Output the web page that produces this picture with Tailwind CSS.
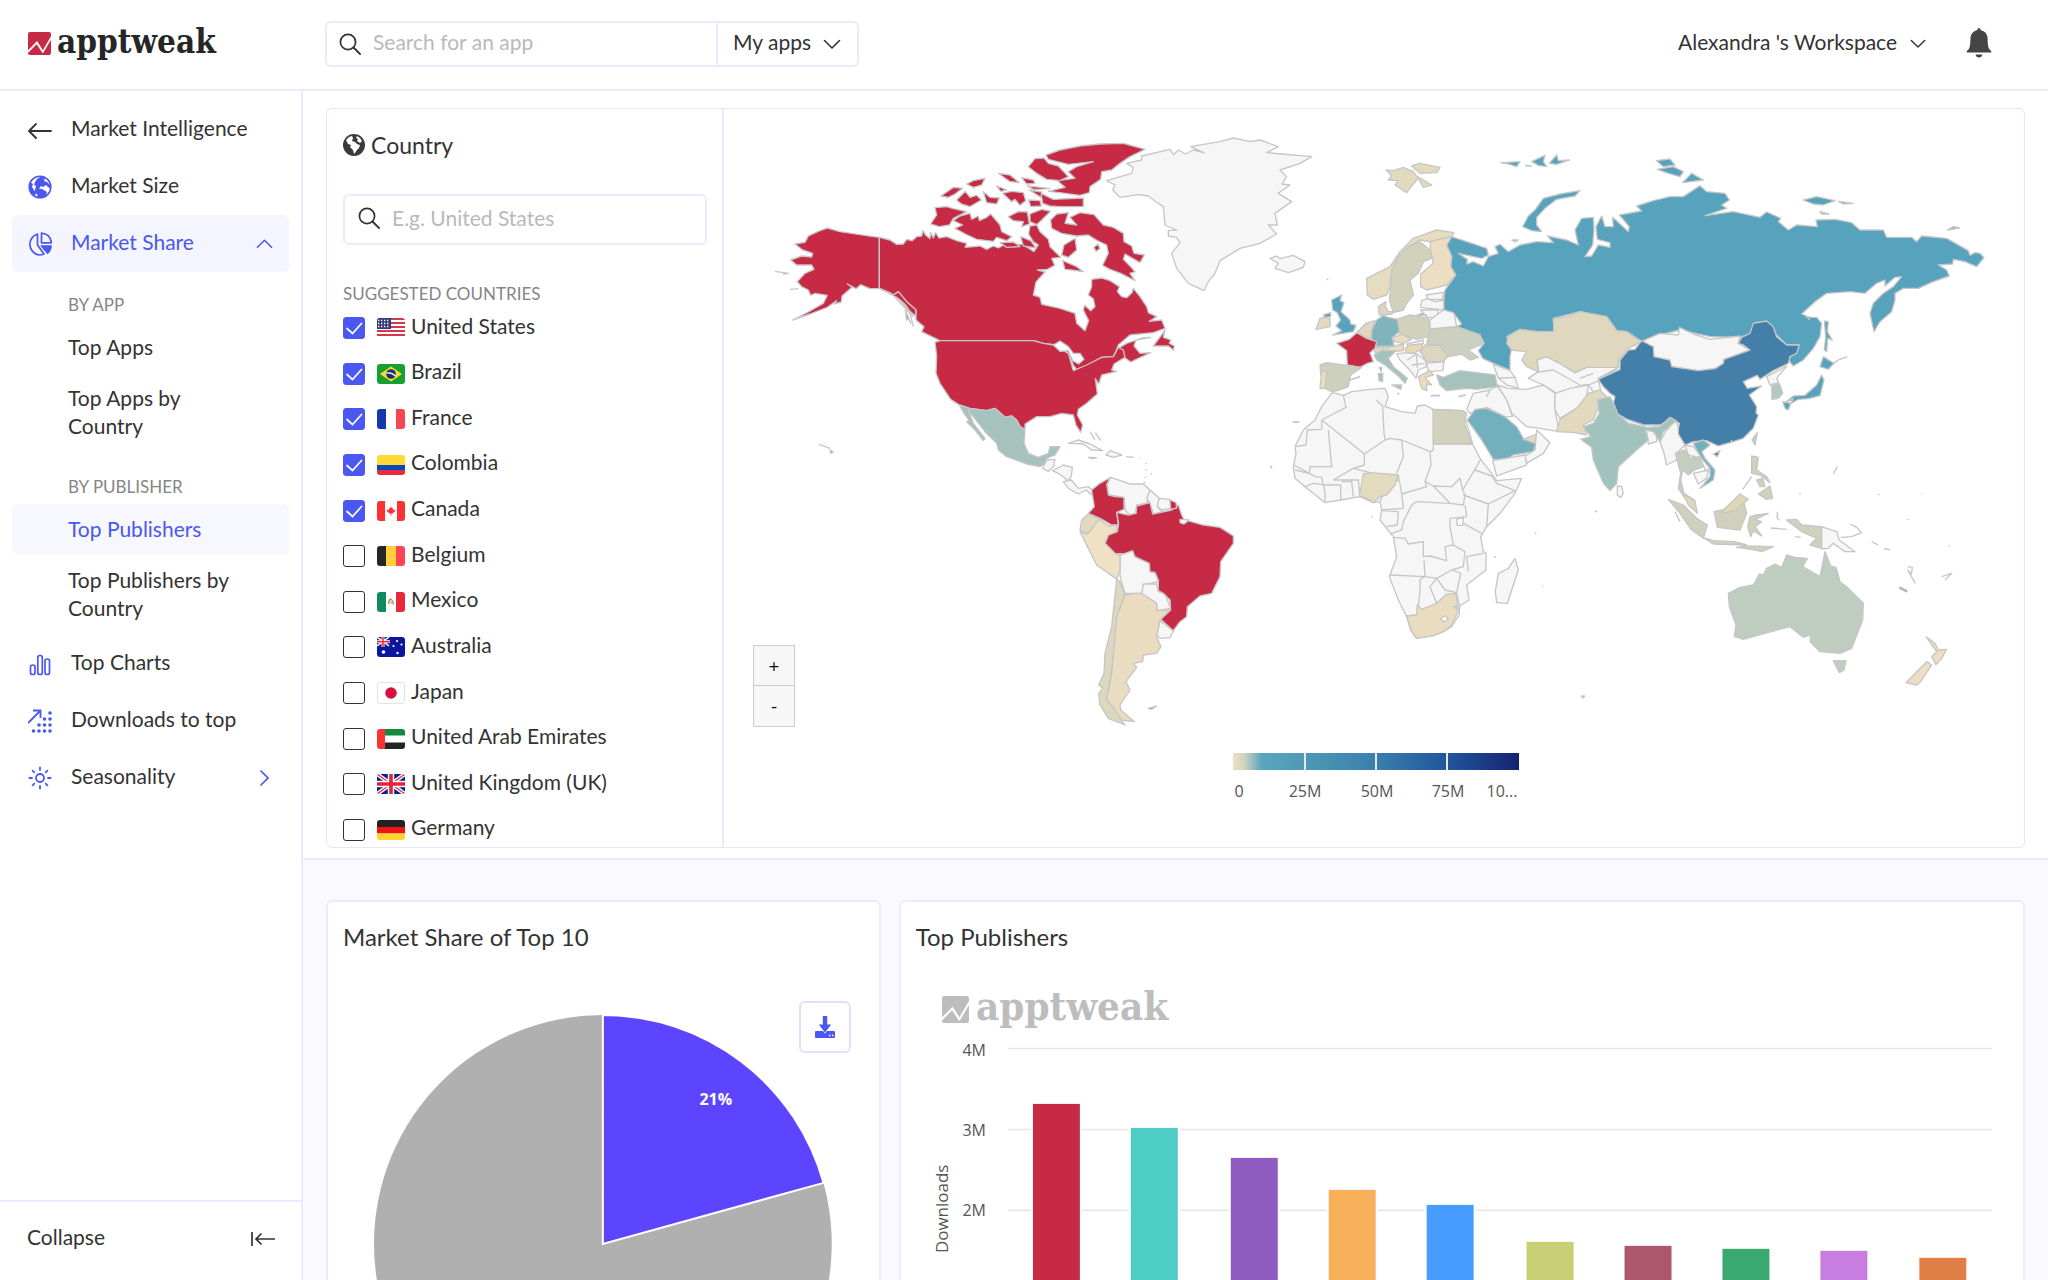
<!DOCTYPE html>
<html lang="en">
<head>
  <meta charset="UTF-8" />
  <meta name="viewport" content="width=device-width, initial-scale=1.0" />
  <title>AppTweak - Market Share</title>
  <script src="https://cdn.jsdelivr.net/npm/@tailwindcss/browser@4"></script>
</head>
<body class="h-screen flex flex-col overflow-hidden bg-white text-[#333] text-[21px] leading-7 font-[Lato,'Open_Sans',sans-serif]">

  <!-- Shared icons -->
  <svg class="hidden">
    <symbol id="i-search" viewBox="0 0 22 22"><circle cx="9" cy="9" r="7.6" fill="none" stroke="#333" stroke-width="1.7"/><path d="M14.5 14.5 21 21" stroke="#333" stroke-width="1.8" stroke-linecap="round"/></symbol>
    <symbol id="i-down" viewBox="0 0 18 10"><path d="M1.5 1.5 9 9l7.500-7.500" fill="none" stroke="currentColor" stroke-width="1.6" stroke-linecap="round" stroke-linejoin="round"/></symbol>
    <symbol id="i-check" viewBox="0 0 22 22"><path d="M4 11.500 9.500 16.500 18.500 6.500" fill="none" stroke="#fff" stroke-width="1.700" stroke-linecap="round"/></symbol>
    <symbol id="i-logo" viewBox="0 0 24 24"><path d="M2 0h20q2 0 2 2v2.500L15.500 19 9.500 9.500 0 19V2Q0 0 2 0Z"/><path d="M0 21.800 9 12.700 15.500 22.500 24 8v14q0 2-2 2H2q-2 0-2-2Z"/></symbol>
  </svg>

  <!-- Header -->
  <header class="flex items-center h-[91px] shrink-0 border-b-2 border-[#eceaff] pb-[2px]">
    <a href="#" class="flex items-center gap-[6px] w-[325px] pl-7">
      <svg class="w-[23px] h-[23px] fill-[#c62a45]"><use href="#i-logo"/></svg>
      <span class="text-[33px] leading-[38px] pb-1 font-bold text-[#262626] font-['DejaVu_Serif_Condensed','DejaVu_Serif',serif]">apptweak</span>
    </a>
    <div class="flex items-center w-[534px] h-[46px] border-2 border-[#eceaff] rounded-md">
      <label for="app-search" class="pl-3"><svg class="w-[22px] h-[22px]"><use href="#i-search"/></svg></label>
      <input id="app-search" type="text" placeholder="Search for an app" class="flex-1 min-w-0 pl-3 pb-[3px] outline-none placeholder:text-[#b9b9b9]" />
      <div class="flex items-center h-full border-l-2 border-[#eceaff] pl-[15px] pr-4">
        <select aria-label="App scope" class="appearance-none outline-none bg-transparent pr-[11px] pb-[3px]"><option>My apps</option></select>
        <svg class="w-[18px] h-[10px]"><use href="#i-down"/></svg>
      </div>
    </div>
    <div class="flex items-center ml-auto pr-[56px]">
      <select aria-label="Workspace" class="appearance-none outline-none bg-transparent pr-3 pb-[3px]"><option>Alexandra 's Workspace</option></select>
      <svg class="w-[16px] h-[9px]"><use href="#i-down"/></svg>
      <button aria-label="Notifications" class="ml-10 pb-[2px]">
        <svg class="w-[26px] h-[30px] fill-[#444]" viewBox="0 0 26 30"><path d="M13 0q1.500 0 1.600 2 6.800 1.500 7 9 0 7 1.500 10 2.400 1.500 2.400 3.500H.5q0-2 2.400-3.500 1.500-3 1.500-10 .2-7.500 7-9Q11.500 0 13 0ZM9.500 26.500h7q-.7 3-3.500 3t-3.500-3Z"/></svg>
      </button>
    </div>
  </header>

  <div class="flex flex-1 min-h-0">
    <!-- Sidebar -->
    <aside class="flex flex-col w-[303px] shrink-0 border-r-2 border-[#eceaff]">
      <nav class="flex-1 px-3 pt-[10px]">
        <a href="#" class="flex items-center h-[57px] pl-4 gap-[19px]">
          <svg class="w-6 h-6" viewBox="0 0 24 24"><path d="M23 13H1M8 6 1 13l7 7" fill="none" stroke="#333" stroke-width="1.800" stroke-linecap="round" stroke-linejoin="round"/></svg>
          <span class="pb-[3px]">Market Intelligence</span>
        </a>
        <a href="#" class="flex items-center h-[57px] pl-4 gap-[19px]">
          <svg class="w-6 h-6" viewBox="0 0 24 24"><circle cx="12" cy="12" r="10.800" fill="#fff" stroke="#4a57f0" stroke-width="1.600"/><path d="M13 1.500 17 3l-1 3 3 1 3 3 1 4-3-2-2-2-3 2-2-1-2 3-4 1 1-4-2-1L7 7l2-3Z M8 14l6 0 5 3-1 3-3 3H10l-1-4-3-2Z" fill="#4a57f0"/><path d="M2 7 5 9 4 12 8 18 7 21 2 17Z" fill="#4a57f0"/></svg>
          <span class="pb-[3px]">Market Size</span>
        </a>
        <a href="#" class="flex items-center h-[57px] pl-4 pr-4 gap-[19px] rounded-md bg-[#f4f5ff] text-[#4a57f0]">
          <svg class="w-6 h-6" viewBox="0 0 24 24" fill="none" stroke="#4a57f0" stroke-width="1.700" stroke-linejoin="round"><path d="M9.500 2A10.800 10.800 0 0 0 11 23q3 0 5-1L9.500 13Z"/><path d="M13.500 1v9.800h9.800Q22.500 2 13.500 1Z"/><path d="M13.500 14H23q0 4-3.500 7Z" fill="#4a57f0"/></svg>
          <span class="pb-[3px]">Market Share</span>
          <svg class="w-[17px] h-[10px] ml-auto rotate-180"><use href="#i-down"/></svg>
        </a>
        <p class="mt-[17px] pl-14 h-[33px] leading-8 text-[17px] text-[#858585]">BY APP</p>
        <a href="#" class="block pl-14 pt-[11px] pb-3">Top Apps</a>
        <a href="#" class="block pl-14 pt-[11px] pb-3 pr-20">Top Apps by Country</a>
        <p class="mt-[19px] pl-14 h-[33px] leading-8 text-[17px] text-[#858585]">BY PUBLISHER</p>
        <a href="#" class="block pl-14 pt-[11px] pb-3 rounded-md bg-[#f7f8fe] text-[#4a57f0]">Top Publishers</a>
        <a href="#" class="block pl-14 pt-[11px] pb-3 pr-10">Top Publishers by Country</a>
        <a href="#" class="flex items-center h-[57px] mt-px pl-4 gap-[19px]">
          <svg class="w-6 h-6" viewBox="0 0 24 24" fill="none" stroke="#4a57f0" stroke-width="1.700"><rect x="2.500" y="13" width="4.500" height="9.500" rx="2"/><rect x="9.800" y="3.500" width="4.500" height="19" rx="2"/><rect x="17" y="7" width="4.500" height="15.500" rx="2"/></svg>
          <span class="pb-[3px]">Top Charts</span>
        </a>
        <a href="#" class="flex items-center h-[57px] pl-4 gap-[19px]">
          <svg class="w-6 h-6" viewBox="0 0 24 24" fill="#4a57f0"><path d="M0 14 12 2M5 1.500h7.500V9" fill="none" stroke="#4a57f0" stroke-width="1.800"/><circle cx="22" cy="4" r="1.800"/><circle cx="22" cy="10" r="1.800"/><circle cx="16.500" cy="10" r="1.800"/><circle cx="22" cy="16" r="1.800"/><circle cx="16.500" cy="16" r="1.800"/><circle cx="11" cy="16" r="1.800"/><circle cx="22" cy="22" r="1.800"/><circle cx="16.500" cy="22" r="1.800"/><circle cx="11" cy="22" r="1.800"/><circle cx="5.500" cy="22" r="1.800"/></svg>
          <span class="pb-[3px]">Downloads to top</span>
        </a>
        <a href="#" class="flex items-center h-[57px] pl-4 pr-5 gap-[19px]">
          <svg class="w-6 h-6" viewBox="0 0 24 24" fill="none" stroke="#4a57f0" stroke-width="1.800" stroke-linecap="round"><circle cx="12" cy="12" r="4"/><path d="M12 1.500V4M12 20v2.500M1.500 12H4M20 12h2.500M4.600 4.600 6.300 6.300M17.700 17.700l1.700 1.700M4.600 19.400l1.700-1.700M17.700 6.300l1.700-1.700"/></svg>
          <span class="pb-[3px]">Seasonality</span>
          <svg class="w-[9px] h-[16px] ml-auto" viewBox="0 0 9 16"><path d="M1 1 8 8 1 15" fill="none" stroke="#4a57f0" stroke-width="1.700" stroke-linecap="round"/></svg>
        </a>
      </nav>
      <button class="flex items-center justify-between h-[80px] border-t-2 border-[#eceaff] pl-[27px] pr-[26px] pb-[5px]">
        <span class="pb-[3px]">Collapse</span>
        <svg class="w-6 h-5" viewBox="0 0 24 20"><path d="M1 3v14M24 10H5M10.500 4.500 5 10l5.500 5.500" fill="none" stroke="#333" stroke-width="1.700"/></svg>
      </button>
    </aside>

    <main class="flex-1 min-w-0 overflow-hidden bg-[#faf9ff]">
      <section class="bg-white border-b-2 border-[#eceaff] px-[23px] pt-[17px] pb-[10px]">
        <div class="flex border border-[#e6e4ff] rounded-md">

          <!-- Country filter -->
          <div class="flex flex-col w-[397px] shrink-0 border-r-2 border-[#eceaff] pl-4 pr-[15px] pt-5 pb-[6px]">
            <h2 class="flex items-center gap-[6px] h-8 text-[23px]">
              <svg class="w-[22px] h-[22px]" viewBox="0 0 22 22"><circle cx="11" cy="11" r="11" fill="#3a3a3a"/><path d="M6 3 9 2l1 2-1 3 3 1 2 2 3 1-1 3-2 2-2 3-1 1-1-4-3-3 1-2-3-1-2-4ZM14 2l3 2 2 3-2 2-3-2 1-2-2-1Z" fill="#fff"/></svg>
              Country
            </h2>
            <div class="flex items-center mt-[33px] h-[51px] border-2 border-[#eceaff] rounded-md">
              <label for="country-search" class="pl-[13px] pb-1"><svg class="w-[22px] h-[22px]"><use href="#i-search"/></svg></label>
              <input id="country-search" type="text" placeholder="E.g. United States" class="flex-1 min-w-0 pl-3 pb-1 outline-none placeholder:text-[#b9b9b9]" />
            </div>
            <h3 class="mt-[35px] mb-[9px] text-[17px] text-[#858585]">SUGGESTED COUNTRIES</h3>
            <ul class="flex flex-col flex-1 justify-between">
              <li class="flex items-center h-[22px]">
                <span class="grid mr-3"><input id="c-us" type="checkbox" checked class="peer [grid-area:1/1] appearance-none w-[22px] h-[22px] rounded-[3px] border border-[#333] checked:border-[#4a57f0] checked:bg-[#4a57f0]" /><svg class="hidden peer-checked:block [grid-area:1/1] w-[22px] h-[22px] pointer-events-none"><use href="#i-check"/></svg></span>
                <svg class="w-[28px] h-5 mr-[6px] rounded-[3px]" viewBox="0 0 28 20"><path fill="#fff" d="M0 0h28v20H0z"/><path d="M0 1h28M0 5h28M0 9h28M0 13h28M0 17h28" stroke="#d2374d" stroke-width="1.900"/><path fill="#34397c" d="M0 0h14v11H0z"/><path d="M1 2.500h12M1 5.500h12M1 8.500h12" stroke="#fff" stroke-width="1.400" stroke-dasharray="1.400 1.600"/></svg>
                <label for="c-us" class="pb-[5px]">United States</label>
              </li>
              <li class="flex items-center h-[22px]">
                <span class="grid mr-3"><input id="c-br" type="checkbox" checked class="peer [grid-area:1/1] appearance-none w-[22px] h-[22px] rounded-[3px] border border-[#333] checked:border-[#4a57f0] checked:bg-[#4a57f0]" /><svg class="hidden peer-checked:block [grid-area:1/1] w-[22px] h-[22px] pointer-events-none"><use href="#i-check"/></svg></span>
                <svg class="w-[28px] h-5 mr-[6px] rounded-[3px]" viewBox="0 0 28 20"><path fill="#17a02f" d="M0 0h28v20H0z"/><path fill="#ffdc27" d="M14 2.500 25 10 14 17.500 3 10Z"/><circle cx="14" cy="10" r="4.800" fill="#14317e"/><path d="M9.500 9q5-1 9 3" fill="none" stroke="#fff" stroke-width="1.300"/></svg>
                <label for="c-br" class="pb-[5px]">Brazil</label>
              </li>
              <li class="flex items-center h-[22px]">
                <span class="grid mr-3"><input id="c-fr" type="checkbox" checked class="peer [grid-area:1/1] appearance-none w-[22px] h-[22px] rounded-[3px] border border-[#333] checked:border-[#4a57f0] checked:bg-[#4a57f0]" /><svg class="hidden peer-checked:block [grid-area:1/1] w-[22px] h-[22px] pointer-events-none"><use href="#i-check"/></svg></span>
                <svg class="w-[28px] h-5 mr-[6px] rounded-[3px]" viewBox="0 0 28 20"><path fill="#1437ad" d="M0 0h9v20H0z"/><path fill="#fff" d="M9 0h10v20H9z"/><path fill="#f44653" d="M19 0h9v20h-9z"/></svg>
                <label for="c-fr" class="pb-[5px]">France</label>
              </li>
              <li class="flex items-center h-[22px]">
                <span class="grid mr-3"><input id="c-co" type="checkbox" checked class="peer [grid-area:1/1] appearance-none w-[22px] h-[22px] rounded-[3px] border border-[#333] checked:border-[#4a57f0] checked:bg-[#4a57f0]" /><svg class="hidden peer-checked:block [grid-area:1/1] w-[22px] h-[22px] pointer-events-none"><use href="#i-check"/></svg></span>
                <svg class="w-[28px] h-5 mr-[6px] rounded-[3px]" viewBox="0 0 28 20"><path fill="#ffd935" d="M0 0h28v10H0z"/><path fill="#0c47b7" d="M0 10h28v5H0z"/><path fill="#e32c3f" d="M0 15h28v5H0z"/></svg>
                <label for="c-co" class="pb-[5px]">Colombia</label>
              </li>
              <li class="flex items-center h-[22px]">
                <span class="grid mr-3"><input id="c-ca" type="checkbox" checked class="peer [grid-area:1/1] appearance-none w-[22px] h-[22px] rounded-[3px] border border-[#333] checked:border-[#4a57f0] checked:bg-[#4a57f0]" /><svg class="hidden peer-checked:block [grid-area:1/1] w-[22px] h-[22px] pointer-events-none"><use href="#i-check"/></svg></span>
                <svg class="w-[28px] h-5 mr-[6px] rounded-[3px]" viewBox="0 0 28 20"><path fill="#fff" d="M0 0h28v20H0z"/><path fill="#fc3232" d="M0 0h8v20H0zM20 0h8v20h-8zM14 5.500l1.200 2 1.200-.5-.4 2.500 1.500-1 .8 1.500-2.800 2.500-1.200.2V15h-.6v-2.300L12.500 12.500 9.700 10l.8-1.500 1.500 1-.4-2.500 1.200.5Z"/></svg>
                <label for="c-ca" class="pb-[5px]">Canada</label>
              </li>
              <li class="flex items-center h-[22px]">
                <span class="grid mr-3"><input id="c-be" type="checkbox" class="peer [grid-area:1/1] appearance-none w-[22px] h-[22px] rounded-[3px] border border-[#333] checked:border-[#4a57f0] checked:bg-[#4a57f0]" /><svg class="hidden peer-checked:block [grid-area:1/1] w-[22px] h-[22px] pointer-events-none"><use href="#i-check"/></svg></span>
                <svg class="w-[28px] h-5 mr-[6px] rounded-[3px]" viewBox="0 0 28 20"><path fill="#262626" d="M0 0h9v20H0z"/><path fill="#ffcf3b" d="M9 0h10v20H9z"/><path fill="#ff4453" d="M19 0h9v20h-9z"/></svg>
                <label for="c-be" class="pb-[5px]">Belgium</label>
              </li>
              <li class="flex items-center h-[22px]">
                <span class="grid mr-3"><input id="c-mx" type="checkbox" class="peer [grid-area:1/1] appearance-none w-[22px] h-[22px] rounded-[3px] border border-[#333] checked:border-[#4a57f0] checked:bg-[#4a57f0]" /><svg class="hidden peer-checked:block [grid-area:1/1] w-[22px] h-[22px] pointer-events-none"><use href="#i-check"/></svg></span>
                <svg class="w-[28px] h-5 mr-[6px] rounded-[3px]" viewBox="0 0 28 20"><path fill="#128a60" d="M0 0h9v20H0z"/><path fill="#fff" d="M9 0h10v20H9z"/><path fill="#e8283c" d="M19 0h9v20h-9z"/><path d="M12 12q-1-3 1.500-5Q17 9 16 12.500" fill="none" stroke="#a98a5b" stroke-width="1.300"/><path d="M13.500 9.500l1.500 2" stroke="#6a8f55"/></svg>
                <label for="c-mx" class="pb-[5px]">Mexico</label>
              </li>
              <li class="flex items-center h-[22px]">
                <span class="grid mr-3"><input id="c-au" type="checkbox" class="peer [grid-area:1/1] appearance-none w-[22px] h-[22px] rounded-[3px] border border-[#333] checked:border-[#4a57f0] checked:bg-[#4a57f0]" /><svg class="hidden peer-checked:block [grid-area:1/1] w-[22px] h-[22px] pointer-events-none"><use href="#i-check"/></svg></span>
                <svg class="w-[28px] h-5 mr-[6px] rounded-[3px]" viewBox="0 0 28 20"><path fill="#0a179c" d="M0 0h28v20H0z"/><path d="M0 0 12 9M12 0 0 9" stroke="#fff" stroke-width="1.500"/><path d="M6 0v10M0 4.700h13" stroke="#fff" stroke-width="3"/><path d="M6 0v10M0 4.700h13" stroke="#f02f45" stroke-width="1.600"/><circle cx="6.500" cy="15" r="1.800" fill="#fff"/><circle cx="20" cy="4" r="1.100" fill="#fff"/><circle cx="24.500" cy="7.500" r="1.100" fill="#fff"/><circle cx="16.500" cy="9" r="1.100" fill="#fff"/><circle cx="20.500" cy="16" r="1.200" fill="#fff"/></svg>
                <label for="c-au" class="pb-[5px]">Australia</label>
              </li>
              <li class="flex items-center h-[22px]">
                <span class="grid mr-3"><input id="c-jp" type="checkbox" class="peer [grid-area:1/1] appearance-none w-[22px] h-[22px] rounded-[3px] border border-[#333] checked:border-[#4a57f0] checked:bg-[#4a57f0]" /><svg class="hidden peer-checked:block [grid-area:1/1] w-[22px] h-[22px] pointer-events-none"><use href="#i-check"/></svg></span>
                <svg class="w-[28px] h-[22px] mr-[6px]" viewBox="0 0 28 22"><rect x=".5" y=".5" width="27" height="21" rx="2.500" fill="#fff" stroke="#e3e3e3"/><circle cx="14" cy="11" r="5.800" fill="#d80f3e"/></svg>
                <label for="c-jp" class="pb-[5px]">Japan</label>
              </li>
              <li class="flex items-center h-[22px]">
                <span class="grid mr-3"><input id="c-ae" type="checkbox" class="peer [grid-area:1/1] appearance-none w-[22px] h-[22px] rounded-[3px] border border-[#333] checked:border-[#4a57f0] checked:bg-[#4a57f0]" /><svg class="hidden peer-checked:block [grid-area:1/1] w-[22px] h-[22px] pointer-events-none"><use href="#i-check"/></svg></span>
                <svg class="w-[28px] h-5 mr-[6px] rounded-[3px]" viewBox="0 0 28 20"><path fill="#fff" d="M8 6h20v8H8z"/><path fill="#128a3d" d="M8 0h20v6.500H8z"/><path fill="#232323" d="M8 13.500h20V20H8z"/><path fill="#fc3232" d="M0 0h8v20H0z"/></svg>
                <label for="c-ae" class="pb-[5px]">United Arab Emirates</label>
              </li>
              <li class="flex items-center h-[22px]">
                <span class="grid mr-3"><input id="c-uk" type="checkbox" class="peer [grid-area:1/1] appearance-none w-[22px] h-[22px] rounded-[3px] border border-[#333] checked:border-[#4a57f0] checked:bg-[#4a57f0]" /><svg class="hidden peer-checked:block [grid-area:1/1] w-[22px] h-[22px] pointer-events-none"><use href="#i-check"/></svg></span>
                <svg class="w-[28px] h-5 mr-[6px] rounded-[3px]" viewBox="0 0 28 20"><path fill="#0b1c8f" d="M0 0h28v20H0z"/><path d="M0 0 28 20M28 0 0 20" stroke="#fff" stroke-width="4"/><path d="M0 0 28 20M28 0 0 20" stroke="#e02a43" stroke-width="1.300"/><path d="M14 0v20M0 10h28" stroke="#fff" stroke-width="6.500"/><path d="M14 0v20M0 10h28" stroke="#e6223d" stroke-width="3.600"/></svg>
                <label for="c-uk" class="pb-[5px]">United Kingdom (UK)</label>
              </li>
              <li class="flex items-center h-[22px]">
                <span class="grid mr-3"><input id="c-de" type="checkbox" class="peer [grid-area:1/1] appearance-none w-[22px] h-[22px] rounded-[3px] border border-[#333] checked:border-[#4a57f0] checked:bg-[#4a57f0]" /><svg class="hidden peer-checked:block [grid-area:1/1] w-[22px] h-[22px] pointer-events-none"><use href="#i-check"/></svg></span>
                <svg class="w-[28px] h-5 mr-[6px] rounded-[3px]" viewBox="0 0 28 20"><path fill="#222" d="M0 0h28v7H0z"/><path fill="#f11414" d="M0 7h28v6.500H0z"/><path fill="#ffd52f" d="M0 13.500h28V20H0z"/></svg>
                <label for="c-de" class="pb-[5px]">Germany</label>
              </li>
            </ul>
          </div>

          <!-- World map -->
          <div class="relative flex-1 min-w-0">
            <svg class="block w-full h-auto" viewBox="724 109 1300 738" role="img" aria-label="Downloads by country">
              <!-- North America -->
              <g transform="translate(740 110) scale(.33333)" stroke="#c6c6c6" stroke-width="4" stroke-linejoin="round">
                <g fill="#c62a45">
                  <path d="M418 382 400 380 360 374 300 365 262 354 240 362 205 378 195 397 165 402 188 420 218 430 215 441 185 438 152 450 170 465 215 465 222 478 195 490 172 515 185 530 205 540 212 556 225 550 262 556 250 580 205 606 158 630 210 612 262 592 290 572 282 582 304 576 306 558 336 532 322 522 348 536 362 524 390 536 418 535Z"/>
                  <path d="M418 382 450 390 470 403 490 402 500 388 516 392 530 380 545 378 549 362 556 374 570 386 572 368 580 384 587 368 597 384 620 380 650 392 680 400 676 412 720 408 740 418 760 408 775 414 800 400 850 404 882 425 895 405 880 395 866 372 870 348 890 345 900 365 925 388 930 410 950 430 962 442 935 445 944 466 922 478 892 480 915 486 888 516 880 555 900 562 905 583 960 595 1005 610 1010 640 1035 662 1046 632 1030 600 1034 586 1052 602 1065 590 1060 566 1045 555 1055 530 1055 508 1085 504 1110 512 1138 530 1132 545 1145 560 1160 563 1176 548 1180 535 1200 560 1220 590 1225 608 1250 620 1228 634 1265 630 1275 655 1240 668 1170 675 1135 705 1130 718 1160 700 1210 683 1232 682 1188 690 1182 708 1200 730 1232 728 1195 745 1172 756 1150 740 1140 715 1130 720 1120 740 1085 742 1060 760 1010 780 1000 765 985 730 950 705 910 700 880 692 600 692 575 680 545 665 552 650 528 630 528 600 500 575 475 545 460 555 418 535Z"/>
                  <path d="M585 697 600 692 880 692 910 700 940 705 985 730 1000 782 1040 765 1085 742 1120 740 1135 712 1150 720 1155 742 1122 762 1115 780 1130 784 1085 795 1076 822 1066 806 1072 852 1040 880 1015 898 1012 915 1028 945 1022 967 1008 945 1000 915 965 910 930 920 890 920 855 942 855 958 840 950 830 930 815 918 795 922 765 895 740 902 690 895 658 885 632 868 600 820 588 790 590 735Z"/>
                  <path d="M1275 660 1258 684 1240 708 1285 708 1300 720 1303 708 1288 700 1292 690 1270 682Z"/>
                  <path d="M418 535 450 548 460 555 475 545 500 575 528 600 526 618 510 604 494 582 470 562 440 546Z"/>
                  <path d="M585 293 620 290 640 296 680 305 640 325 628 345 598 350 572 342 590 315Z"/>
                  <path d="M640 332 660 318 690 310 695 328 715 318 718 332 740 322 752 312 780 345 785 365 815 380 800 392 770 382 760 394 710 388 676 372 645 355 668 345Z"/>
                  <path d="M603 258 640 232 668 235 645 252 625 262Z"/><path d="M650 270 676 244 690 262 710 256 724 270 690 290 664 282Z"/><path d="M730 245 750 262 778 264 770 282 740 278Z"/><path d="M775 190 810 195 838 218 808 214Z"/><path d="M788 250 815 244 850 248 857 272 840 286 825 268 815 275Z"/><path d="M680 222 700 212 735 205 725 225 700 232Z"/><path d="M845 203 880 210 885 220 860 222Z"/><path d="M770 228 800 240 782 244Z"/><path d="M862 228 900 232 930 236 880 238Z"/>
                  <path d="M805 320 835 305 862 306 868 342 845 350 850 335 820 332Z"/><path d="M866 270 900 272 904 288 872 290Z"/><path d="M870 312 905 298 932 304 905 330 890 344 870 335Z"/><path d="M842 380 872 392 888 414 850 408Z"/><path d="M780 398 820 396 840 410 800 412Z"/>
                  <path d="M903 250 940 268 1030 264 1030 290 960 290 930 288 908 280Z"/><path d="M868 240 905 246 903 262Z"/>
                  <path d="M918 135 960 120 1020 108 1080 102 1150 100 1215 118 1170 140 1140 160 1115 180 1085 185 1082 208 1050 230 1048 248 1020 256 960 248 925 244 975 232 952 212 1005 205 985 185 1010 170 1060 155 985 163 925 148Z"/>
                  <path d="M865 170 885 146 912 144 925 160 955 168 985 200 960 212 920 208 890 190Z"/>
                  <path d="M935 355 932 330 950 312 985 308 975 340 1010 345 990 322 1020 308 1062 314 1090 345 1120 352 1150 370 1152 395 1175 408 1182 430 1213 435 1200 458 1155 432 1150 448 1172 470 1185 485 1170 490 1185 512 1142 490 1110 478 1088 466 1105 430 1100 405 1072 392 1045 375 1010 378 965 370Z"/>
                  <path d="M965 435 972 405 1005 385 1010 420 985 442Z"/><path d="M968 452 1010 470 1030 485 995 480 975 478Z"/>
                  <path d="M270 1020 280 1026 273 1030Z"/><path d="M496 600 512 640 505 625 500 630Z" />
                </g>
                <path d="M940 705 960 693 985 710 1000 730 1020 730 1032 748 1016 762 998 752 985 722 960 724Z" fill="#fff"/>
                <path d="M1062 412 1074 402 1080 416 1068 424Z" fill="#c62a45"/>
                <path d="M1205 138 1290 118 1300 134 1316 120 1336 132 1360 120 1392 128 1352 110 1440 95 1480 84 1530 95 1560 90 1615 110 1580 128 1715 140 1680 160 1620 180 1640 200 1626 222 1650 225 1615 250 1655 275 1605 310 1612 345 1585 345 1610 372 1560 400 1500 415 1440 452 1425 490 1405 515 1392 542 1345 520 1310 475 1295 430 1320 398 1310 382 1285 378 1285 362 1310 360 1275 345 1270 290 1240 270 1225 258 1195 254 1140 262 1118 240 1125 225 1100 212 1175 190 1180 172 1160 160 1205 150Z" fill="#f6f6f6"/>
                <path d="M658 885 690 895 740 902 765 895 795 922 815 918 830 930 840 950 855 958 852 1000 865 1030 895 1042 925 1030 930 1010 960 1010 945 1035 920 1045 915 1060 900 1070 860 1062 800 1040 775 1020 770 1000 735 965 700 920 685 900 700 940 735 985 730 992 705 960 680 935 688 932 672 910Z" fill="#a5c2bc"/>
                <path d="M105 484 145 490 128 493M150 538 175 536M237 1003 270 1015M465 562 510 610 520 650M480 570 520 620M1050 965 1065 990M1066 968 1082 992" fill="none"/>
              </g>
              <!-- South America -->
              <g transform="translate(1000 380) scale(.33333)" stroke="#c6c6c6" stroke-width="4" stroke-linejoin="round">
                <g fill="#f6f6f6">
                  <path d="M128 265 140 240 165 238 160 260 145 274Z"/><path d="M158 272 190 255 217 262 214 288 205 302 175 280Z"/><path d="M190 305 214 300 235 325 265 320 280 332 275 345 258 330 235 342 205 325Z"/>
                  <path d="M205 190 235 180 270 192 308 212 275 210 250 192Z"/><path d="M318 225 330 212 365 225 340 232Z"/><path d="M265 232 290 233 278 236Z"/><path d="M380 230 400 232Z"/>
                  <path d="M332 292 322 312 325 345 372 352 375 390 390 405 408 400 410 375 440 370 450 330 430 312 390 312 350 298Z"/><path d="M450 330 478 355 472 380 488 398 460 402 450 370 440 355Z"/><path d="M478 355 510 358 512 385 484 390 472 378Z"/>
                  <path d="M360 525 398 512 405 530 448 550 450 575 468 580 475 605 430 615 425 640 375 640 360 590Z"/><path d="M430 612 470 612 475 635 494 640 512 685 470 692 470 670 425 645Z"/><path d="M480 722 520 752 510 773 480 775 468 762Z"/>
                </g>
                <g fill="#c62a45">
                  <path d="M332 292 320 312 325 345 345 350 372 352 372 388 350 397 355 435 335 435 300 415 265 400 283 380 275 330 300 310Z"/>
                  <path d="M350 397 385 405 408 400 410 378 450 368 458 402 515 390 535 375 545 405 552 418 570 424 610 435 660 442 700 468 700 490 662 545 660 590 635 640 600 648 562 680 560 710 540 725 520 752 482 718 512 690 510 660 490 640 475 632 475 600 465 577 450 575 448 550 405 530 398 512 375 520 345 522 315 490 325 465 352 455 356 430Z"/>
                  <path d="M510 360 528 368 530 384 512 388Z"/>
                </g>
                <path d="M540 418 568 420 552 432 540 428Z" fill="#fff"/>
                <path d="M265 402 298 418 262 462 240 450 245 420Z" fill="#e3dabd"/>
                <path d="M240 455 262 462 298 418 325 438 350 435 350 455 325 465 315 490 345 520 360 525 360 570 350 597 325 580 290 555 265 505Z" fill="#f0e0c4"/>
                <path d="M350 597 360 605 375 645 350 710 345 800 330 900 320 960 350 990 360 1015 375 1035 325 1015 300 975 296 940 308 925 296 915 312 880 315 820 335 740Z" fill="#dcd8bd"/>
                <path d="M375 645 405 640 425 640 470 670 470 692 510 690 480 720 470 770 483 800 470 820 430 825 428 845 400 850 410 862 378 905 390 930 360 975 362 990 403 1025 365 1020 345 990 320 960 335 880 350 710Z" fill="#e9dcc1"/>
                <path d="M445 985 470 978 455 988Z" fill="#57a3bd"/>
                <path d="M418 234v2M438 248v4M438 268v4M454 280v4M436 290v4M430 310 436 306M812 258 816 262M880 126 896 126Z" fill="none"/>
              </g>
              <!-- Europe, Russia, Central Asia -->
              <g transform="translate(1260 130) scale(.33333)" stroke="#c6c6c6" stroke-width="4" stroke-linejoin="round">
                <g fill="#f6f6f6">
                  <path d="M30 385 50 378 60 386 100 376 135 395 130 412 85 428 45 415 55 400Z"/>
                  <path d="M498 495 550 487 548 508 505 508Z"/><path d="M482 532 485 512 502 506 525 515 552 510 550 540 505 535Z"/><path d="M482 540 535 540 530 562 500 562Z"/><path d="M510 595 510 570 550 540 582 545 590 590 550 597Z"/><path d="M440 642 490 630 490 640 445 648Z"/>
                  <path d="M410 672 440 668 470 672 495 690 500 710 475 720 468 745 445 715 420 690Z"/><path d="M500 700 552 695 548 722 505 725Z"/><path d="M442 690 470 672 472 715M455 705 492 700" fill="none"/>
                  <path d="M700 703 750 722 765 742 715 745Z"/><path d="M715 745 765 742 775 775 740 765Z"/>
                  <path d="M830 690 860 680 900 700 945 728 980 712 1075 712 1040 740 1010 765 970 765 890 790 850 765 805 745 835 725Z"/>
                  <path d="M712 765 745 775 800 778 850 765 885 790 885 840 898 905 840 895 800 890 755 850 740 810Z"/><path d="M885 790 930 775 985 765 980 800 950 835 900 865 885 840Z"/><path d="M985 765 1010 755 1075 712 1015 745 1022 782 1000 785Z"/>
                  <path d="M620 838 640 790 690 780 712 768 740 810 757 860 735 860 680 832 630 850Z"/><path d="M832 690 835 726 880 720 960 765M680 800 690 780M960 745 1000 730" fill="none"/>
                </g>
                <g fill="#57a3bd">
                  <path d="M575 320 620 335 680 355 685 375 665 385 595 370 622 388 620 402 640 395 670 408 685 380 715 370 705 350 720 343 745 365 780 345 830 335 880 338 862 318 920 330 955 345 945 300 965 265 1000 262 1002 300 998 345 975 380 995 378 1015 345 1050 352 1050 338 1012 328 1008 290 1025 258 1035 290 1060 290 1058 262 1080 282 1105 305 1108 290 1078 255 1145 243 1130 228 1180 212 1230 200 1270 200 1320 167 1340 185 1395 190 1408 210 1385 225 1400 235 1335 257 1420 245 1500 262 1520 246 1562 265 1555 275 1585 300 1610 285 1672 290 1668 270 1725 268 1775 278 1800 300 1870 300 1880 322 1955 322 1970 335 1985 318 2060 325 2125 362 2130 376 2145 368 2160 370 2172 383 2150 410 2115 395 2080 388 2078 402 2035 405 2060 420 2068 438 2020 455 1975 475 1930 475 1905 490 1905 510 1895 545 1860 575 1842 605 1830 550 1840 520 1870 490 1900 470 1925 440 1905 442 1875 468 1875 450 1850 460 1815 490 1770 485 1700 490 1665 515 1625 552 1650 562 1670 562 1685 580 1680 620 1660 655 1630 690 1600 708 1585 690 1595 675 1610 660 1615 645 1580 645 1545 610 1520 575 1485 578 1475 610 1440 622 1350 620 1260 600 1200 615 1145 635 1100 605 1070 602 1040 560 960 545 880 565 882 605 830 605 780 598 740 620 755 655 750 680 750 720 700 700 668 685 655 662 672 640 660 615 590 590 605 582 580 548 552 540 552 500 555 480 587 435 572 410 575 380 560 345Z"/>
                  <path d="M788 290 805 258 825 240 850 205 900 192 960 182 945 198 890 208 855 235 830 262 830 285 845 305 815 302Z"/>
                  <path d="M722 98 780 95 770 110 750 103Z"/><path d="M815 95 855 76 850 95 860 110 835 106Z"/><path d="M868 100 890 75 895 92 928 90 890 103Z"/><path d="M756 330 775 330 765 336Z"/>
                  <path d="M1190 92 1230 87 1245 105 1210 110Z"/><path d="M1192 118 1240 110 1270 125 1260 140 1225 130Z"/><path d="M1268 158 1295 130 1330 150Z"/><path d="M1630 210 1670 200 1725 212 1690 225 1660 222Z"/><path d="M1735 214 1780 220 1750 222Z"/><path d="M1680 245 1707 252 1685 252Z"/><path d="M2062 300 2080 290 2098 294Z"/>
                  <path d="M1693 573 1705 575 1702 605 1717 630 1703 625 1700 665 1693 660 1697 620Z"/>
                  <path d="M470 556 485 550 500 556Z"/>
                  <path d="M215 510 245 495 240 512 252 518 243 545 270 570 272 582 288 586 280 605 218 615 245 602 228 588 242 570 232 548 218 540Z"/><path d="M190 555 212 548 212 560 195 562Z"/>
                </g>
                <path d="M378 120 400 122 430 112 460 125 475 145 460 162 440 188 405 165 415 152 385 150 395 138Z M455 108 480 100 540 112 530 128 480 130Z M472 140 515 165 490 172Z" fill="#e3dabd"/>
                <path d="M320 445 360 425 390 410 420 365 460 325 530 300 582 308 575 320 510 335 480 330 445 350 415 380 395 420 390 470 380 495 340 508 322 495Z" fill="#e6dcc0"/>
                <path d="M395 420 415 380 445 350 480 335 510 360 515 385 490 395 475 430 450 450 460 495 440 520 430 540 400 548 388 510 392 470Z" fill="#d2d2bc"/>
                <path d="M510 335 575 320 560 345 575 380 572 410 587 435 560 465 500 480 482 470 482 432 520 400 512 360Z" fill="#ecdec2"/>
                <path d="M355 530 378 515 376 530 385 545 402 545 395 552 358 555Z" fill="#dcd6c0"/>
                <path d="M168 598 180 565 195 562 210 565 210 590Z" fill="#e3dabd"/>
                <path d="M410 568 450 555 505 565 510 600 505 620 470 628 420 612Z" fill="#d2d2bc"/>
                <path d="M335 600 350 570 370 556 385 562 412 568 418 605 398 622 402 648 350 650 335 630Z" fill="#7fb4bd"/>
                <path d="M395 625 425 612 455 628 430 640 405 635Z M370 655 430 642 430 662 395 665Z" fill="#e9dcc1"/>
                <path d="M435 655 450 645 488 642 485 658 460 670 440 668Z" fill="#e9d8b0"/>
                <path d="M290 608 318 580 345 572 335 600 332 628Z M340 655 368 650 372 664 345 668Z" fill="#e0d7c0"/>
                <path d="M230 640 268 628 290 608 320 625 350 635 345 655 330 668 340 695 322 700 300 712 262 705 260 662Z" fill="#c62a45"/>
                <path d="M180 705 200 698 305 712 272 735 265 770 232 782 215 785 195 775 182 730Z" fill="#cdd0bd"/>
                <path d="M185 722 200 725 195 775 180 775Z" fill="#ecdcbc"/>
                <path d="M342 675 365 662 408 662 385 685 400 710 442 745 435 760 415 738 375 705 350 690Z M395 765 425 765 422 778Z M355 730 368 730 368 755 357 752Z" fill="#a5c2bc"/>
                <path d="M358 712 365 712 364 725Z" fill="#c62a45"/>
                <path d="M480 665 495 645 540 645 565 678 550 695 500 695Z" fill="#dcd6c0"/>
                <path d="M475 740 510 722 520 735 495 742 515 765 500 762 500 782 485 775Z" fill="#ecdcbc"/>
                <path d="M500 640 510 597 590 590 660 615 672 640 625 660 655 682 630 690 605 672 565 680 540 645 510 645Z" fill="#cbd0c0"/>
                <path d="M530 735 550 742 600 722 705 735 712 770 650 778 620 775 560 782 540 765Z" fill="#a5c2bc"/>
                <path d="M740 640 745 618 780 598 830 605 882 605 880 565 920 560 960 545 1040 560 1070 602 1100 605 1145 635 1105 655 1075 690 1075 712 980 712 945 728 900 700 860 680 830 690 835 725 800 710 785 690 800 665 755 660Z" fill="#dfd8bf"/>
                <path d="M890 905 900 868 950 835 985 790 1020 780 1040 800 1015 830 1000 870 970 885 980 915 945 908Z" fill="#e3dabd"/>
                <path d="M622 870 645 838 680 835 735 860 770 890 790 925 828 940 820 965 760 975 740 988 700 988 665 930Z" fill="#72b0be"/>
                <path d="M790 928 830 912 825 940Z" fill="#e3dabd"/>
                <path d="M512 797 540 797M595 800 618 795M412 790 418 792M200 447 205 449M270 750 300 740M795 107 815 108" fill="none" stroke-width="5"/>
              </g>
              <!-- East and South Asia -->
              <g transform="translate(1560 130) scale(.33333)" stroke="#c6c6c6" stroke-width="4" stroke-linejoin="round">
                <path d="M250 632 300 610 355 615 358 592 400 612 450 628 540 618 535 640 570 660 490 690 490 712 415 722 335 710 282 680Z" fill="#f6f6f6"/>
                <path d="M245 632 280 650 282 680 330 690 335 710 415 722 465 716 490 700 492 688 570 660 550 645 535 640 545 622 570 610 580 580 620 573 640 590 650 620 680 645 718 645 710 670 690 680 685 700 640 722 600 748 592 736 550 755 562 775 605 768 568 795 590 830 588 850 595 855 580 895 550 925 510 938 475 948 440 932 400 935 375 945 352 912 358 880 335 865 300 885 250 885 205 870 170 850 160 820 165 800 150 790 130 770 115 748 180 718 180 690 205 660 225 658Z" fill="#437fa9"/>
                <path d="M460 972 480 962 472 980Z" fill="#437fa9"/>
                <g fill="#f6f6f6">
                  <path d="M620 740 680 708 650 745 655 758 630 765Z"/><path d="M178 858 205 870 250 885 250 894 205 882Z"/><path d="M258 895 290 910 290 935 265 942Z"/><path d="M172 1068 185 1070 190 1090 182 1103 172 1095Z"/>
                  <path d="M300 935 320 900 345 872 355 890 355 912 375 945 350 970 350 990 320 1005 312 970Z"/><path d="M375 945 400 950 425 980 450 1010 440 1030 420 985 385 975Z"/><path d="M400 1030 445 1020 440 1045 415 1062Z"/>
                </g>
                <path d="M635 768 658 760 668 790 655 805 636 808Z" fill="#b3c8bf"/>
                <path d="M576 930 592 908 585 945Z" fill="#c5cdbf"/>
                <path d="M785 735 792 750 780 797 745 806 715 808 690 822 700 806 674 818 700 798 735 796 770 765Z M668 815 692 820 685 840 676 836Z M780 710 790 680 822 700 805 718Z" fill="#57a3bd"/>
                <path d="M822 700 835 690 862 680M515 930 512 938M735 555 750 570" fill="none"/>
                <path d="M112 810 150 800 165 830 175 855 205 880 260 892 300 890 330 862 348 872 310 905 300 935 280 905 258 900 265 930 230 960 175 1010 170 1060 150 1082 130 1060 100 990 95 952 62 928 92 920 70 890 100 880 118 850Z" fill="#a2c2bd"/>
                <path d="M346 970 375 960 390 985 420 980 430 1010 400 1022 385 1035 368 1020 362 1050 372 1090 405 1112 375 1105 355 1075 362 1030Z" fill="#c5cdbf"/>
                <path d="M400 940 430 930 450 945 425 965 435 985 465 1020 460 1050 420 1075 450 1040 450 1015 425 985 410 960Z" fill="#6fb0bd"/>
              </g>
              <!-- Africa -->
              <g transform="translate(1270 370) scale(.33333)" stroke="#c6c6c6" stroke-width="4" stroke-linejoin="round">
                <g fill="#f6f6f6">
                  <path d="M187 68 222 76 245 65 300 58 345 55 355 80 345 110 395 125 435 130 442 108 465 105 490 118 580 122 590 160 608 222 630 265 672 320 680 332 755 325 735 370 690 430 650 470 632 500 640 545 648 550 648 600 590 645 597 690 568 708 568 735 545 770 520 785 490 797 440 805 422 780 410 740 385 690 358 620 380 560 370 500 362 490 330 450 335 420 330 395 310 398 270 380 212 390 165 398 130 370 105 350 75 325 70 290 78 250 75 230 100 180 135 150 155 110Z"/>
                  <path d="M800 180 840 218 820 250 770 280 765 258 795 240Z"/><path d="M668 272 765 255 770 285 680 318Z"/><path d="M735 565 745 600 712 700 680 698 676 665 685 610 715 595Z"/><path d="M560 448 580 442 578 466 562 466Z" fill="#fff"/>
                </g>
                <path d="M155 150 228 112 220 76M155 150 155 178 112 180 108 225 75 230M155 150 275 245 283 252 345 210 342 190 338 108 318 90M175 180 185 290 120 290 118 310 72 285M345 210 360 205 395 210 480 245 490 240 490 118M490 222 608 222M283 252 283 285 250 295 190 330M395 210 400 260 380 310M250 295 300 308M492 240 480 245 483 285 465 335 470 350 395 372M385 315 395 370 400 415M465 335 490 348 545 350 570 325 578 360 632 268M490 348 540 400 580 405 585 375 578 360M615 300 665 318 680 340 735 362 655 402 580 375M655 402 650 470M585 405 590 440 540 445 540 470 550 525M540 400 440 395 425 405 400 455 395 480 362 492M335 422 385 425 382 465 350 470M370 502 405 505 415 522 460 515 460 560 480 558 530 572 525 530 550 525 585 545 580 590 545 600 500 625 465 620 462 570M635 490 580 460M640 550 590 560 595 605M360 615 465 620 450 628 450 665 442 735 410 738M465 620 500 625 525 660 560 668 572 610 545 600M500 625 480 650 500 700M560 668 568 708M75 300 118 310 135 320 155 322 165 365 165 398M105 350 130 340 165 345 212 345 212 390M215 335 245 335 250 380M190 330 265 330 270 380M385 330 345 360 330 395M400 415 335 420" fill="none"/>
                <path d="M490 118 580 122 590 130 583 160 605 222 490 222Z" fill="#d2d2bc"/>
                <path d="M280 312 300 308 385 315 375 345 350 375 330 380 310 398 290 385 268 378Z" fill="#e4dabd"/>
                <path d="M410 738 440 735 442 705 455 718 500 700 530 672 558 670 562 705 570 712 545 765 520 785 490 797 440 805 425 785Z" fill="#e9dcc1"/>
                <path d="M512 745 525 738 535 746 522 756Z M552 710 560 708 560 718Z" fill="#fff"/>
                <path d="M68 156 88 156M0 290 6 294M305 440h4M795 490h4M675 558v5M816 648h3M975 426 980 422" fill="none" stroke-width="5"/>
              </g>
              <!-- Oceania -->
              <g transform="translate(1580 370) scale(.33333)" stroke="#c6c6c6" stroke-width="4" stroke-linejoin="round">
                <path d="M445 670 480 652 520 645 538 612 550 615 560 595 585 582 605 592 620 555 645 562 682 565 668 590 720 620 735 545 752 588 768 592 780 635 800 650 850 700 848 750 815 835 780 850 720 845 690 815 692 795 670 802 630 770 555 790 490 808 463 800 468 765 448 710Z M760 872 798 872 792 900 778 908Z" fill="#bfcdc0"/>
                <path d="M265 388 310 405 350 445 382 465 370 505 335 480 300 430Z M370 503 400 512 465 515 500 525 400 522Z M470 532 500 528 580 530 545 545 515 538Z M402 425 450 415 490 390 500 430 480 480 412 472Z M510 440 530 435 565 430 525 448 545 455 525 470 545 498 520 482 512 500 503 470Z M620 450 650 448 665 465 725 470 725 535 690 525 710 505 665 485Z" fill="#cfd1bc"/>
                <path d="M310 370 345 395 352 430 325 405Z M425 425 480 372 505 388 465 420 440 428Z" fill="#dfd8b8"/>
                <path d="M515 258 535 262 530 300 560 320 570 338 540 315 515 310Z M530 330 548 325 555 350 540 350Z M535 372 570 348 578 385 560 388Z" fill="#d2d2bc"/>
                <path d="M725 470 770 485 778 510 825 545 795 545 760 520 745 535 725 537Z" fill="#f6f6f6"/>
                <path d="M1038 800 1065 820 1075 840 1100 838 1085 865 1068 884 1055 860 1070 845Z M1040 875 1055 885 1022 935 1010 945 978 938Z" fill="#ecdec2"/>
                <path d="M782 502 815 500 845 488 830 472 810 462M515 320 488 358M592 425 592 445 598 450M572 474 620 478M645 500 662 502M285 425 300 455M875 515 895 525M912 535 930 540M983 590 997 592 994 612 983 600 1006 640M1085 620 1115 610 1095 630M760 312 772 290M660 368v6M895 374h4M1024 373h3M983 448h5M1106 528h3" fill="none"/>
                <path d="M958 652 982 665" stroke="#b5b5b5" stroke-width="8"/>
                <path d="M4 978 14 978 9 984Z" fill="#c62a45"/>
              </g>

              <!-- Legend -->
              <defs>
                <linearGradient id="scale">
                  <stop offset="0" stop-color="#efe0c3"/><stop offset=".04" stop-color="#cfd2bd"/><stop offset=".1" stop-color="#5ba6bd"/><stop offset=".25" stop-color="#4d99b7"/><stop offset=".5" stop-color="#397fad"/><stop offset=".75" stop-color="#20569b"/><stop offset="1" stop-color="#15236f"/>
                </linearGradient>
              </defs>
              <rect x="1233" y="753" width="286" height="17" fill="url(#scale)"/>
              <path d="M1305 753v17M1376 753v17M1447 753v17" stroke="#e8e8e8" stroke-width="2"/>
              <g class="text-[16px] font-['Open_Sans',sans-serif]" fill="#555" text-anchor="middle">
                <text x="1239" y="797">0</text><text x="1305" y="797">25M</text><text x="1377" y="797">50M</text><text x="1448" y="797">75M</text><text x="1502" y="797">10...</text>
              </g>
            </svg>

            <div class="absolute left-[29px] bottom-[120px] flex flex-col w-[42px] border border-[#ccc] text-[19px] text-[#111] font-['Open_Sans',sans-serif]">
              <button aria-label="Zoom in" class="h-10 bg-[#f7f7f7] border-b border-[#ccc]">+</button>
              <button aria-label="Zoom out" class="h-10 bg-[#f7f7f7]">-</button>
            </div>
          </div>
        </div>
      </section>

      <section class="grid grid-cols-[33fr_67fr] gap-[18px] px-[23px] pt-[40px]">
        <!-- Market share -->
        <div class="relative bg-white border-2 border-[#eceaff] rounded-md">
          <h2 class="px-[15px] pt-[19px] pb-[23px] text-[24px] leading-8">Market Share of Top 10</h2>
          <button aria-label="Download" class="absolute right-[28px] top-[99px] flex items-center justify-center w-[52px] h-[52px] bg-white border-2 border-[#e2e0ff] rounded-md">
            <svg class="w-5 h-[22px]" viewBox="0 0 20 22" fill="#4a57f0"><rect y="15" width="20" height="7" rx="1"/><path d="M7.800 0h4.400v8.500h4L10 16.500 3.800 8.500h4Z" stroke="#fff" stroke-width="1.200" paint-order="stroke"/><path d="M14 19.500h1.500M17 19.500h1.500" stroke="#fff" stroke-width="1.300"/></svg>
          </button>
          <svg class="block w-full h-auto" viewBox="328 976 551 510" role="img" aria-label="Market share pie chart">
            <circle cx="603" cy="1244" r="229" fill="#b0b0b0"/>
            <path d="M603 1244V1015A229 229 0 0 1 823.800 1183Z" fill="#5d45ff" stroke="#fff" stroke-width="2"/>
            <text x="716" y="1105" text-anchor="middle" fill="#fff" class="text-[16px] font-bold font-['Open_Sans',sans-serif]">21%</text>
          </svg>
        </div>

        <!-- Top publishers -->
        <div class="bg-white border-2 border-[#eceaff] rounded-md">
          <h2 class="px-[15px] pt-[19px] pb-[23px] text-[24px] leading-8">Top Publishers</h2>
          <svg class="block w-full h-auto" viewBox="901 976 1123 410" role="img" aria-label="Downloads of top publishers">
            <svg x="942" y="996" width="27" height="27" fill="#bdbdbd"><use href="#i-logo"/></svg>
            <text x="976" y="1020" fill="#bdbdbd" class="text-[40px] font-bold font-['DejaVu_Serif_Condensed','DejaVu_Serif',serif]">apptweak</text>
            <path d="M1008 1048.500h985M1008 1129.500h985M1008 1210.500h985M1008 1291.500h985M1008 1372.500h985" stroke="#e6e6e8" stroke-width="1.500"/>
            <g fill="#555" class="text-[16px] font-['Open_Sans',sans-serif]">
              <text x="986" y="1056" text-anchor="end">4M</text>
              <text x="986" y="1136" text-anchor="end">3M</text>
              <text x="986" y="1216" text-anchor="end">2M</text>
              <text transform="translate(948 1209) rotate(-90)" text-anchor="middle" class="text-[17px]">Downloads</text>
            </g>
            <g stroke="#fff" stroke-width="2">
              <rect x="1032" y="1103" width="49" height="270" fill="#c62a45"/>
              <rect x="1130" y="1127" width="49" height="246" fill="#4ecdc4"/>
              <rect x="1230" y="1157" width="49" height="216" fill="#8e5cc0"/>
              <rect x="1328" y="1189" width="49" height="184" fill="#f9b05b"/>
              <rect x="1426" y="1204" width="49" height="169" fill="#489bff"/>
              <rect x="1526" y="1241" width="49" height="132" fill="#c7ce74"/>
              <rect x="1624" y="1245" width="49" height="128" fill="#ae566c"/>
              <rect x="1722" y="1248" width="49" height="125" fill="#3aa970"/>
              <rect x="1820" y="1250" width="49" height="123" fill="#c77ee0"/>
              <rect x="1919" y="1257" width="49" height="116" fill="#df7e45"/>
            </g>
          </svg>
        </div>
      </section>
    </main>
  </div>

</body>
</html>
